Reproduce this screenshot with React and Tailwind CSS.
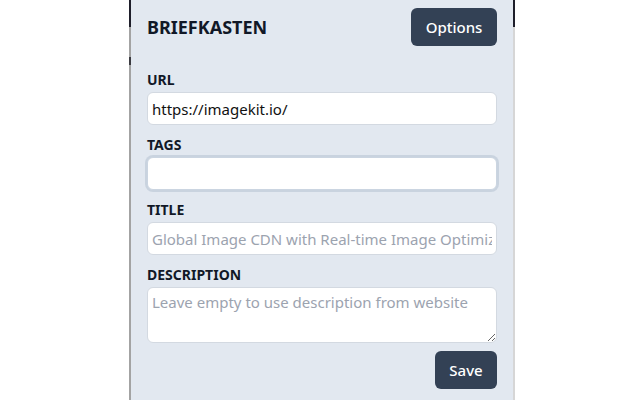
import React from "react";

const font = { fontFamily: '"Noto Sans", "Open Sans", sans-serif' };

function Label({ children }) {
  return <label className="block text-sm leading-5 font-bold text-[#111827]">{children}</label>;
}

export default function App() {
  return (
    <div className="flex h-[400px] w-[640px] overflow-hidden bg-white" style={font}>
      <div className="ml-[129px] flex w-[2px] flex-col">
        <div className="h-[27px] bg-[#1e1e2a]" />
        <div className="h-[30px] bg-[#a3a3a3]" />
        <div className="h-[8px] bg-[#3a3a40]" />
        <div className="flex-1 bg-[#a3a3a3]" />
      </div>
      <div className="w-[382px] bg-[#e2e8f0] px-4 pt-2">
        <div className="mb-6 flex h-[38px] items-center justify-between">
          <h1 className="text-lg font-bold text-[#111827]">BRIEFKASTEN</h1>
          <button className="flex h-[38px] w-[86px] items-center justify-center rounded-md bg-[#334155] text-[15px] font-medium text-white">
            Options
          </button>
        </div>

        <Label>URL</Label>
        <input
          className="mt-[2px] block h-[33px] w-full rounded-md border border-[#d3d9e1] bg-white px-1 text-[15px] text-[#111] outline-none"
          defaultValue="https://imagekit.io/"
        />

        <div className="mt-[10px]">
          <Label>TAGS</Label>
          <input className="mt-[2px] block h-[33px] w-full rounded-md border border-[#cbd5e1] bg-white px-1 text-[15px] outline-none ring-2 ring-[#c9d3df]" />
        </div>

        <div className="mt-[10px]">
          <Label>TITLE</Label>
          <input
            className="mt-[2px] block h-[33px] w-full rounded-md border border-[#d3d9e1] bg-white px-1 text-[15px] text-[#111] outline-none placeholder:text-[#9ca3af]"
            placeholder="Global Image CDN with Real-time Image Optimization"
          />
        </div>

        <div className="mt-[10px]">
          <Label>DESCRIPTION</Label>
          <textarea
            className="mt-[2px] block h-[56px] w-full rounded-md border border-[#d3d9e1] bg-white px-1 py-[3px] text-[15px] text-[#111] outline-none placeholder:text-[#9ca3af]"
            placeholder="Leave empty to use description from website"
          />
        </div>

        <div className="mt-2 flex justify-end">
          <button className="flex h-[38px] w-[62px] items-center justify-center rounded-md bg-[#334155] text-[15px] font-medium text-white">
            Save
          </button>
        </div>
      </div>
      <div className="flex w-[2px] flex-col">
        <div className="h-[27px] bg-[#1e1e2a]" />
        <div className="flex-1 bg-[#d6d6d6]" />
      </div>
    </div>
  );
}
